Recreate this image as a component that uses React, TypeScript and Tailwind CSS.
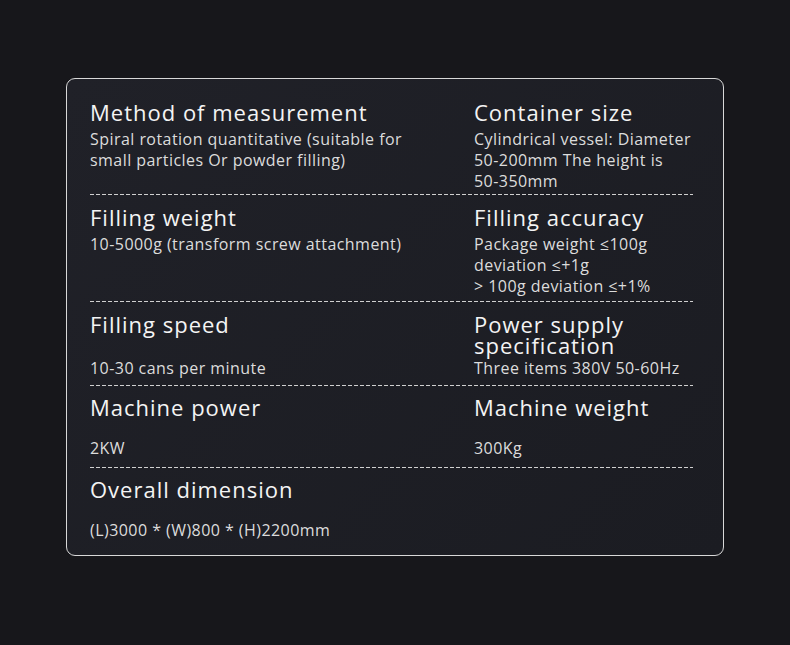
import React from "react";

type Cell = { title: string[]; body: string[] };
type Row = { cells: Cell[]; spaced: boolean; pt: string; pb: string; line: boolean };

const rows: Row[] = [
  {
    spaced: false,
    pt: "pt-[23px]",
    pb: "pb-[2px]",
    line: true,
    cells: [
      { title: ["Method of measurement"], body: ["Spiral rotation quantitative (suitable for", "small particles Or powder filling)"] },
      { title: ["Container size"], body: ["Cylindrical vessel: Diameter", "50-200mm The height is", "50-350mm"] },
    ],
  },
  {
    spaced: false,
    pt: "pt-[12px]",
    pb: "pb-[4px]",
    line: true,
    cells: [
      { title: ["Filling weight"], body: ["10-5000g (transform screw attachment)"] },
      { title: ["Filling accuracy"], body: ["Package weight \u2264100g", "deviation \u2264+1g", "> 100g deviation \u2264+1%"] },
    ],
  },
  {
    spaced: true,
    pt: "pt-[12px]",
    pb: "pb-[6px]",
    line: true,
    cells: [
      { title: ["Filling speed"], body: ["10-30 cans per minute"] },
      { title: ["Power supply", "specification"], body: ["Three items 380V 50-60Hz"] },
    ],
  },
  {
    spaced: true,
    pt: "pt-[11px]",
    pb: "pb-[8px]",
    line: true,
    cells: [
      { title: ["Machine power"], body: ["2KW"] },
      { title: ["Machine weight"], body: ["300Kg"] },
    ],
  },
  {
    spaced: true,
    pt: "pt-[11px]",
    pb: "pb-[14px]",
    line: false,
    cells: [{ title: ["Overall dimension"], body: ["(L)3000 * (W)800 * (H)2200mm"] }],
  },
];

function CellView({ cell, spaced }: { cell: Cell; spaced: boolean }) {
  return (
    <div className={spaced ? "flex min-h-[62px] flex-col justify-between" : "flex flex-col"}>
      <div className="text-[22px] leading-[21px] tracking-[1px] text-[#f4f4f4]">
        {cell.title.map((t, k) => (
          <React.Fragment key={t}>
            {k > 0 && <br />}
            {t}
          </React.Fragment>
        ))}
      </div>
      <div
        className={
          spaced
            ? "mt-[2px] text-[16px] leading-[21px] tracking-[0.45px] text-[#dcdcdc]"
            : "mt-[6px] text-[16px] leading-[21px] tracking-[0.45px] text-[#dcdcdc]"
        }
      >
        {cell.body.map((b) => (
          <div key={b}>{b}</div>
        ))}
      </div>
    </div>
  );
}

export default function App() {
  return (
    <div
      className="flex h-[645px] w-[790px] items-start bg-[#17171b] pl-[66px] pt-[78px]"
      style={{ fontFamily: '"Open Sans", "Noto Sans", sans-serif' }}
    >
      <div className="h-[478px] w-[658px] rounded-[9px] border border-[#d8d8d8] bg-[linear-gradient(135deg,#202128,#1b1c22)] pl-[23px] pr-[30px]">
        {rows.map((row, i) => (
          <div key={i}>
            <div className={`grid grid-cols-[384px_1fr] ${row.pt} ${row.pb}`}>
              {row.cells.map((c, j) => (
                <CellView key={j} cell={c} spaced={row.spaced} />
              ))}
            </div>
            {row.line && (
              <div className="h-px bg-[linear-gradient(to_right,#d0d0d0_0_4px,transparent_4px_6px)] bg-[length:6px_1px] bg-repeat-x" />
            )}
          </div>
        ))}
      </div>
    </div>
  );
}
